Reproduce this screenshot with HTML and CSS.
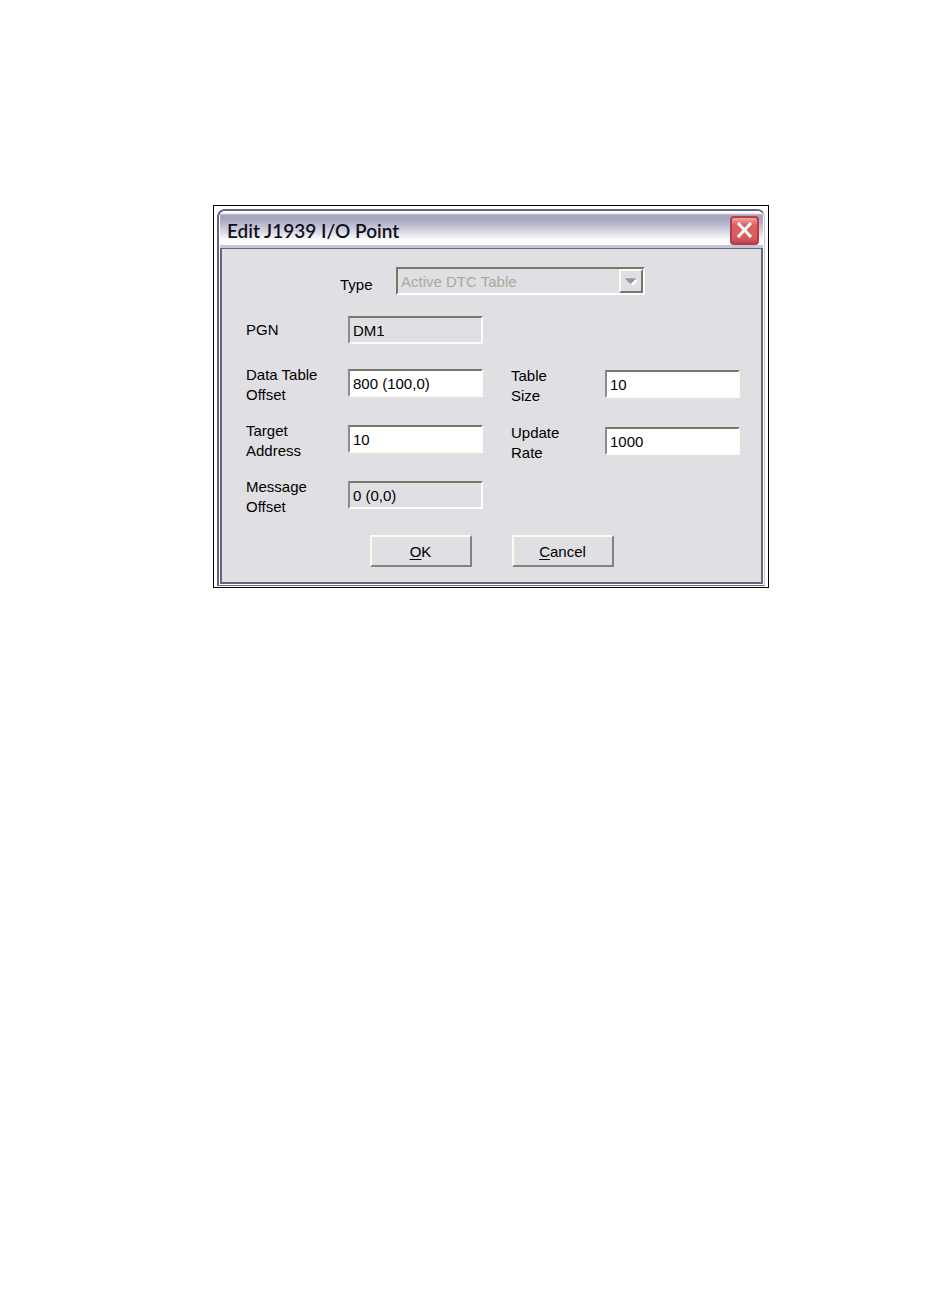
FILE: index.html
```html
<!DOCTYPE html>
<html lang="en">
<head>
    <meta charset="UTF-8">
    <meta name="viewport" content="width=device-width, initial-scale=1.0">
    <title>Edit J1939 I/O Point</title>
    <link rel="stylesheet" href="styles.css">
</head>
<body>

    <div class="frame">
        <div class="window">

            <div class="titlebar">
                <h1>Edit J1939 I/O Point</h1>
                <button class="close" type="button" aria-label="Close">
                    <svg viewBox="0 0 29 29"><path d="M8 7L21 21M21 7L8 21"></path></svg>
                </button>
            </div>

            <form class="dialog">
                <div class="type-row">
                    <label for="type">Type</label>
                    <div class="select-wrapper">
                        <select id="type" disabled>
                            <option>Active DTC Table</option>
                        </select>
                        <span class="drop">
                            <svg viewBox="0 0 22 22"><path class="light" d="M7 10h11v1l-5 5z"></path><path d="M5 8h11v1l-5 5h-1l-5-5z"></path></svg>
                        </span>
                    </div>
                </div>

                <div class="columns">
                    <div class="column">
                        <div class="field single">
                            <label for="pgn">PGN</label>
                            <input id="pgn" type="text" value="DM1" readonly>
                        </div>
                        <div class="field">
                            <label for="offset">Data Table<br>Offset</label>
                            <input id="offset" type="text" value="800 (100,0)">
                        </div>
                        <div class="field">
                            <label for="target">Target<br>Address</label>
                            <input id="target" type="text" value="10">
                        </div>
                        <div class="field">
                            <label for="message">Message<br>Offset</label>
                            <input id="message" type="text" value="0 (0,0)" readonly>
                        </div>
                    </div>

                    <div class="column column-right">
                        <div class="field">
                            <label for="size">Table<br>Size</label>
                            <input id="size" type="text" value="10">
                        </div>
                        <div class="field">
                            <label for="rate">Update<br>Rate</label>
                            <input id="rate" type="text" value="1000">
                        </div>
                    </div>
                </div>

                <div class="actions">
                    <button type="button"><u>O</u>K</button>
                    <button type="button"><u>C</u>ancel</button>
                </div>
            </form>

        </div>
    </div>

</body>
</html>
```
FILE: styles.css
```css
*{
    box-sizing: border-box;
    margin: 0;
    padding: 0;
}

body{
    padding: 205px 181px 40px 213px;
    background: #ffffff;
    color: #000000;
    font-family: "Liberation Sans", Arial, sans-serif;
    font-size: 15px;
    line-height: 20px;
}

.frame{
    border: 1px solid #000000;
    padding: 3px 3px 1px;
    background: #ffffff;
}

.window{
    border: 1px solid #65657f;
    border-top-width: 2px;
    border-left-width: 2px;
    border-right-color: #c6c6d8;
    border-radius: 8px 8px 0 0;
    padding: 0 1px 1px;
    background: #ffffff;
    overflow: hidden;
}

.titlebar{
    height: 37px;
    display: flex;
    align-items: center;
    justify-content: space-between;
    padding: 5px 4px 0 7px;
    border-bottom: 3px solid #c6c6d6;
    background: linear-gradient(#ffffff 0, #ffffff 2px, #a5a5c0 4px, #a9a9c3 9px, #d0d0df 19px, #ffffff 29px);
}

.titlebar h1{
    color: #10101c;
    font-family: Lato, "Open Sans", sans-serif;
    font-size: 19px;
    font-weight: 600;
    line-height: 24px;
}

.close{
    width: 29px;
    height: 29px;
    flex-shrink: 0;
    border: 2px solid #b53b4d;
    border-radius: 4px;
    background: linear-gradient(#efa898, #dc6161 7px, #d95b5e 80%, #bd4352);
}

.close svg{
    display: block;
    width: 29px;
    height: 29px;
    margin: -2px;
}

.close path{
    fill: none;
    stroke: #ffffff;
    stroke-width: 3px;
}

.dialog{
    border: 2px solid #65657f;
    border-top-width: 1px;
    padding: 18px 21px 15px 24px;
    background: #e0dfe3;
}

.type-row{
    display: flex;
    align-items: flex-end;
    padding: 0 95px 0 94px;
}

.type-row label{
    width: 56px;
    flex-shrink: 0;
}

.select-wrapper{
    flex: 1;
    position: relative;
}

select, input{
    width: 100%;
    height: 28px;
    border: 2px solid;
    border-color: #77776b #fdfdf5 #fdfdf5 #8c8c90;
    border-radius: 0;
    background: #ffffff;
    color: #000000;
    font: 15px "Liberation Sans", Arial, sans-serif;
    outline: none;
}

select{
    display: block;
    appearance: none;
    padding-left: 3px;
    background: #e0dfe3;
    border-color: #77776b #ffffff #ffffff #77776b;
}

select:disabled{
    color: #aaa99c;
    opacity: 1;
}

.drop{
    position: absolute;
    top: 2px;
    right: 2px;
    width: 24px;
    height: 24px;
    border: 2px solid;
    border-color: #fbfbf0 #77776b #77776b #fbfbf0;
    background: #e0dfe3;
}

.drop svg{
    display: block;
    width: 20px;
    height: 20px;
}

.drop path{
    fill: #98989a;
}

.drop .light{
    fill: #ffffff;
}

.columns{
    display: flex;
    gap: 28px;
    margin-top: 19px;
}

.column{
    flex: 237;
    display: flex;
    flex-direction: column;
    gap: 18px;
}

.column-right{
    flex: 229;
    gap: 19px;
    padding-top: 51px;
}

.field{
    height: 38px;
    display: flex;
    align-items: center;
}

.field label{
    width: 102px;
    flex-shrink: 0;
    padding-top: 3px;
}

.column-right label{
    width: 94px;
}

.single{
    height: 32px;
}

.single label{
    padding-top: 0;
}

.field input{
    flex: 1;
    min-width: 0;
    padding: 0 3px;
}

.field input:read-only{
    background: #e0dfe3;
}

.actions{
    display: flex;
    justify-content: center;
    gap: 40px;
    margin-top: 21px;
    padding-right: 3px;
}

.actions button{
    width: 102px;
    height: 32px;
    border: 2px solid;
    border-color: #fbfbf0 #84847c #84847c #fbfbf0;
    background: #e0dfe3;
    color: #000000;
    font: 15px "Liberation Sans", Arial, sans-serif;
}

.actions u{
    text-underline-offset: 2px;
}
```
